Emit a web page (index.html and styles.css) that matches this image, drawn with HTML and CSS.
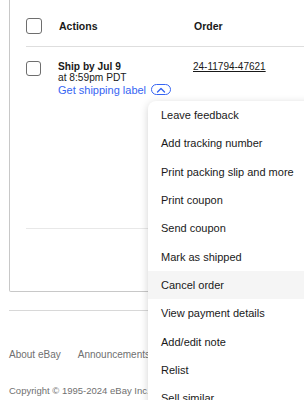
FILE: index.html
```html
<!DOCTYPE html>
<html lang="en">
<head>
<meta charset="utf-8">
<title>Orders</title>
<link rel="stylesheet" href="styles.css">
</head>
<body>
<div class="page">
  <section class="card">
    <div class="thead">
      <span class="cb"></span>
      <span class="col-actions th">Actions</span>
      <span class="th">Order</span>
    </div>
    <div class="row">
      <span class="cb"></span>
      <div class="col-actions">
        <div class="ship">Ship by Jul 9</div>
        <div class="time">at 8:59pm PDT</div>
        <div class="label-line">
          <a class="link">Get shipping label</a>
          <span class="caret"><svg width="10" height="6" viewBox="0 0 10 6"><path d="M1.5 5L5 1.5L8.5 5" fill="none" stroke="#3665f3" stroke-width="1.4" stroke-linecap="round" stroke-linejoin="round"/></svg></span>
        </div>
      </div>
      <a class="order">24-11794-47621</a>
    </div>
  </section>
  <footer class="footer">
    <nav class="links"><span>About eBay</span><span>Announcements</span></nav>
    <p class="copy">Copyright © 1995-2024 eBay Inc.</p>
  </footer>
  <ul class="menu">
    <li>Leave feedback</li>
    <li>Add tracking number</li>
    <li>Print packing slip and more</li>
    <li>Print coupon</li>
    <li>Send coupon</li>
    <li>Mark as shipped</li>
    <li class="active">Cancel order</li>
    <li>View payment details</li>
    <li>Add/edit note</li>
    <li>Relist</li>
    <li>Sell similar</li>
  </ul>
</div>
</body>
</html>
```
FILE: styles.css
```css
html, body { margin: 0; padding: 0; overflow: hidden; background: #fff; }
body { font-family: "Liberation Sans", Arial, sans-serif; color: #191919; width: 304px; height: 400px; }
.page { position: relative; padding-left: 9px; }
.card {
  width: 400px;
  height: 292px;
  box-sizing: border-box;
  border: 1px solid #c8c8c8;
  border-top: none;
  border-radius: 0 0 0 2px;
}
.thead, .row {
  margin-left: 16px;
  display: flex;
  align-items: flex-start;
}
.thead {
  height: 47px;
  box-sizing: border-box;
  padding-top: 18px;
  border-bottom: 1px solid #dedede;
}
.thead .th { line-height: 16px; }
.row {
  height: 182px;
  box-sizing: border-box;
  padding-top: 14px;
  border-bottom: 1px solid #e8e8e8;
}
.cb {
  width: 16px; height: 16px;
  box-sizing: border-box;
  border: 1.5px solid #6e6e6e;
  border-radius: 3px;
  flex: none;
}
.row .cb { width: 15px; height: 15px; }
.col-actions { width: 135px; margin-left: 17px; flex: none; }
.th { font-size: 10.5px; font-weight: 700; }
.ship { font-size: 10.2px; font-weight: 700; line-height: 11px; }
.time { font-size: 10.2px; line-height: 11px; }
.label-line { display: flex; align-items: center; height: 13px; }
.link { font-size: 11px; color: #3665f3; line-height: 12px; }
.caret {
  display: inline-flex; align-items: center; justify-content: center;
  width: 20px; height: 11px; box-sizing: border-box;
  margin-left: 5px;
  border: 1.5px solid #3665f3; border-radius: 6px;
}
.order { font-size: 10px; line-height: 11px; text-decoration: underline; color: #191919; }
.footer { margin-top: 18px; border-top: 1px solid #d8d8d8; width: 400px; }
.links { display: flex; gap: 17px; font-size: 10px; color: #707070; margin-top: 38px; line-height: 12px; }
.copy { margin: 24px 0 0; font-size: 9.5px; color: #707070; line-height: 12px; }
.menu {
  position: absolute;
  left: 148px; top: 101px;
  width: 180px;
  margin: 0; padding: 0;
  list-style: none;
  background: #fff;
  border-radius: 8px 0 0 0;
  box-shadow: 0 2px 8px rgba(0,0,0,0.18);
}
.menu li {
  height: 28.33px;
  display: flex; align-items: center;
  padding-left: 13px;
  font-size: 11px;
}
.menu li.active { background: #f5f5f5; }
```
